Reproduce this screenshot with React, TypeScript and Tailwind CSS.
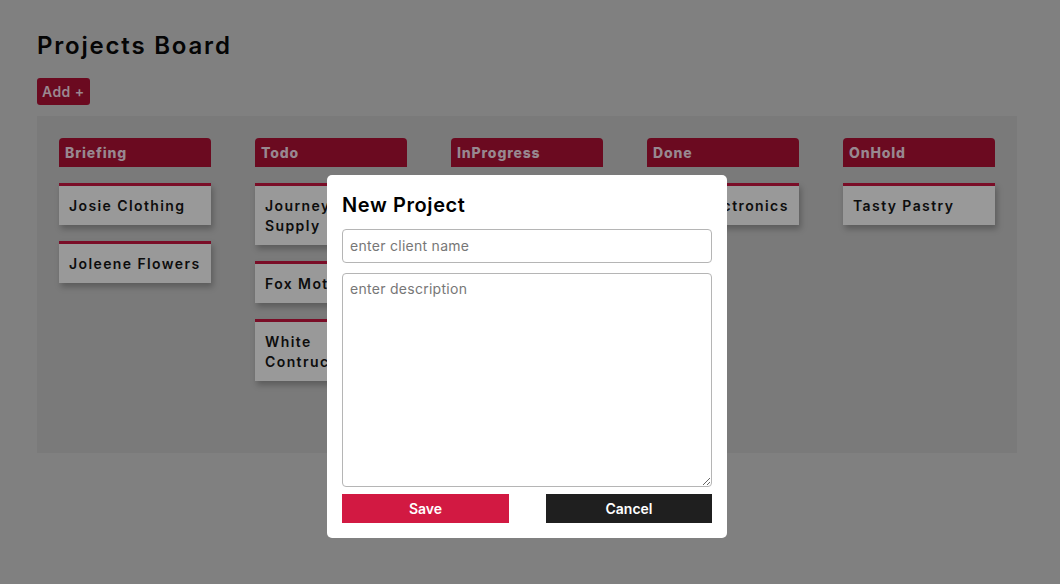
import React from "react";

const columns = [
  { id: "briefing", name: "Briefing", cards: ["Josie Clothing", "Joleene Flowers"] },
  { id: "todo", name: "Todo", cards: ["Journey\nSupply", "Fox Motors", "White Contructions"] },
  { id: "inprogress", name: "InProgress", cards: ["Mark Bakery"] },
  { id: "done", name: "Done", cards: ["Zeta Electronics"] },
  { id: "onhold", name: "OnHold", cards: ["Tasty Pastry"] },
];

export default function App() {
  return (
    <div className="relative min-h-screen bg-[#808080] font-['Inter','Liberation_Sans',sans-serif]">
      <div className="pl-[37px] pr-[43px] pt-[30px]">
        <h1 className="text-[24px] font-semibold leading-[32px] tracking-[1.8px] text-[#050505]">
          Projects Board
        </h1>
        <button className="mt-[16px] h-[27px] rounded-[3px] bg-[#6b0a20] px-[5px] text-[14px] font-semibold tracking-[0.03em] text-[#9a8890]">
          Add +
        </button>
        <div className="mt-[11px] flex h-[337px] justify-between bg-[#7a7a7a] p-[22px]">
          {columns.map(col => (
            <div className="w-[152px]" key={col.id}>
              <div className="h-[29px] rounded-t-[4px] bg-[#6b0a20] px-[6px] pt-[5px] text-[14px] font-extrabold leading-[20px] tracking-[0.06em] text-[#988890]">
                {col.name}
              </div>
              <div className="mt-[16px] flex flex-col gap-[16px]">
                {col.cards.map(card => (
                  <div
                    key={card}
                    className="whitespace-pre-line border-t-[3px] border-[#7a0d27] bg-[#999999] px-[10px] pt-[10px] pb-[9px] text-[14px] font-semibold leading-[20px] tracking-[0.1em] text-[#0d0d0d] shadow-[2px_4px_6px_rgba(0,0,0,0.25)]"
                  >
                    {card}
                  </div>
                ))}
              </div>
            </div>
          ))}
        </div>
      </div>

      <div className="absolute inset-0 flex justify-center pt-[175px] pr-[6px]">
        <div className="h-[363px] w-[400px] rounded-[5px] bg-white px-[15px] pt-[16px]">
          <h2 className="text-[20px] font-semibold leading-[28px] tracking-[0.03em] text-black">New Project</h2>
          <input
            className="mt-[10px] block h-[34px] w-full rounded-[4px] border border-[#b5b5b5] px-[7px] pb-[2px] text-[14px] tracking-[0.02em] text-[#333] outline-none placeholder:text-[#777]"
            placeholder="enter client name"
          />
          <textarea
            className="mt-[10px] block h-[214px] w-full rounded-[4px] border border-[#b5b5b5] px-[7px] py-[4px] text-[14px] tracking-[0.02em] text-[#333] outline-none placeholder:text-[#777]"
            placeholder="enter description"
          />
          <div className="mt-[7px] flex justify-between">
            <button className="h-[29px] w-[167px] bg-[#d21942] text-[14px] font-semibold text-white">Save</button>
            <button className="h-[29px] w-[166px] bg-[#1f1f1f] text-[14px] font-semibold text-white">Cancel</button>
          </div>
        </div>
      </div>
    </div>
  );
}
